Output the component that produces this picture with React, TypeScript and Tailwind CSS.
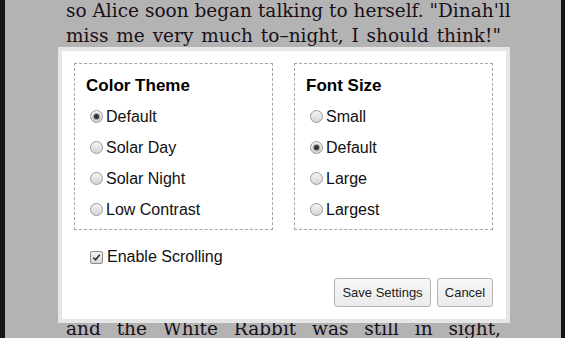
import React from 'react'

const themes = ['Default', 'Solar Day', 'Solar Night', 'Low Contrast']
const sizes = ['Small', 'Default', 'Large', 'Largest']

function Radio({ checked }: { checked: boolean }) {
  return (
    <span className="flex items-center justify-center w-[13px] h-[13px] rounded-full border border-[#9a9a9a] bg-gradient-to-b from-[#f4f4f4] to-[#d6d6d6] shrink-0">
      {checked && <span className="w-[5px] h-[5px] rounded-full bg-[#333] shadow-[0_0_1px_1px_rgba(60,60,60,0.4)]" />}
    </span>
  )
}

function Group({ title, options, selected }: { title: string; options: string[]; selected: string }) {
  return (
    <fieldset className="w-[200px] h-[167px] border border-dashed border-[#a6a6a6] pt-[12px] pl-[11px]">
      <h3 className="text-[17px] leading-[20px] font-bold text-black mb-[5px]">{title}</h3>
      {options.map(opt => (
        <label key={opt} className="flex items-center h-[31px] ml-[4px] gap-[3px] text-[16px] text-[#111]">
          <Radio checked={opt === selected} />
          <span>{opt}</span>
        </label>
      ))}
    </fieldset>
  )
}

export default function App() {
  return (
    <div className="relative w-[565px] h-[338px] overflow-hidden flex bg-[#b3b3b3]">
      <div className="w-[5px] bg-[#161616]" />

      {/* Page text */}
      <div className="flex-1 flex flex-col pl-[61px] font-['DejaVu_Serif',serif] text-[18.5px] leading-[25px] text-[#1a0f18]">
        <div className="w-[435px] mt-[-2px]">
          <p className="whitespace-nowrap [text-align-last:justify]">so Alice soon began talking to herself. "Dinah'll</p>
          <p className="whitespace-nowrap [text-align-last:justify]">miss me very much to–night, I should think!"</p>
        </div>
        <p className="w-[435px] mt-auto mb-[-3px] whitespace-nowrap [text-align-last:justify]">and the White Rabbit was still in sight,</p>
      </div>

      <div className="w-[4px] bg-[#161616]" />

      {/* Settings dialog */}
      <div className="absolute left-[58px] top-[47px] w-[452px] h-[276px] border-4 border-[#e6e6e6] bg-white pt-[12px] pl-[12px] pr-[13px] font-['Liberation_Sans',Arial,sans-serif]">
        <div className="flex gap-[21px]">
          <Group title="Color Theme" options={themes} selected="Default" />
          <Group title="Font Size" options={sizes} selected="Default" />
        </div>

        <label className="flex items-center h-[20px] mt-[17px] ml-[16px] gap-[4px] text-[16px] text-[#111]">
          <span className="flex items-center justify-center w-[13px] h-[13px] border border-[#8f8f8f] rounded-[2px] bg-gradient-to-b from-[#f2f2f2] to-[#d8d8d8]">
            <svg viewBox="0 0 10 10" className="w-[9px] h-[9px]">
              <path d="M1.5 5.2 L4 7.6 L8.6 2" fill="none" stroke="#333" strokeWidth="1.8" />
            </svg>
          </span>
          <span>Enable Scrolling</span>
        </label>

        <div className="flex justify-end gap-[6px] mt-[11px] text-[13px] text-[#222]">
          <button className="w-[97px] h-[29px] border border-[#b5b5b5] rounded-[3px] bg-gradient-to-b from-[#f6f6f6] to-[#ebebeb]">
            Save Settings
          </button>
          <button className="w-[56px] h-[29px] border border-[#b5b5b5] rounded-[3px] bg-gradient-to-b from-[#f6f6f6] to-[#ebebeb]">
            Cancel
          </button>
        </div>
      </div>
    </div>
  )
}
